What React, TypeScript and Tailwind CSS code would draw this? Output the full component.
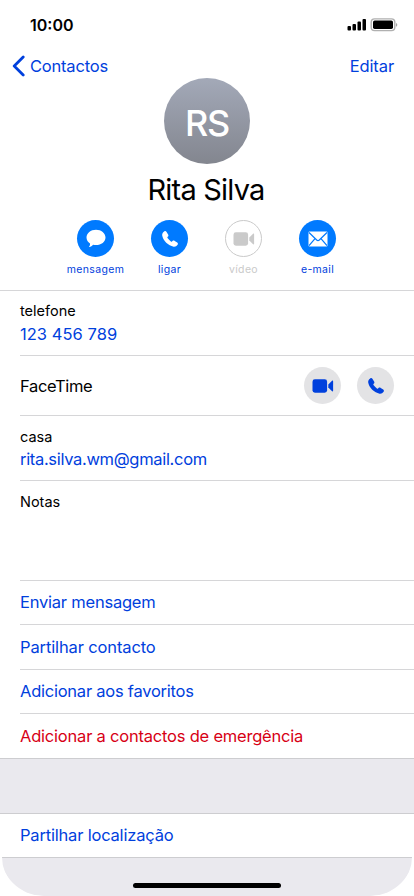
import type { ReactNode } from "react";

const PHONE_PATH =
  "M3.200 1.400C4 .9 4.900 1 5.400 1.800L7.100 4.500C7.600 5.300 7.500 6 6.900 6.600L6.500 7C6.200 7.400 6.200 7.700 6.500 8.100C7.400 9.400 8.600 10.600 9.900 11.500C10.300 11.800 10.600 11.800 11 11.500L11.500 11C12.100 10.500 12.900 10.400 13.700 10.900L16.200 12.600C17 13.200 17.100 14.100 16.600 14.800C15.600 16.200 14.300 16.900 12.600 16.700C7.500 16 1.900 10.500 1.200 5.600C1 3.800 1.700 2.300 3.200 1.400Z";

function PhoneIcon() {
  return (
    <svg width="18" height="18" viewBox="0 0 18 18" fill="currentColor">
      <path d={PHONE_PATH} />
    </svg>
  );
}

function VideoIcon() {
  return (
    <svg width="22" height="14" viewBox="0 0 22 14" fill="currentColor">
      <rect x="0.500" y="0.300" width="14.600" height="13.400" rx="2.400" />
      <path d="M16.300 5.600L19.800 1.900C20.400 1.300 21.100 1.500 21.100 2.400V11.600C21.100 12.500 20.400 12.700 19.800 12.100L16.300 8.400Z" />
    </svg>
  );
}

function MessageIcon() {
  return (
    <svg width="20" height="19" viewBox="0 0 20 19" fill="currentColor">
      <path d="M10 .8C15.300 .8 19.500 4.200 19.500 8.500S15.300 16.100 10 16.100C9 16.100 8 16 7.100 15.700C6.200 16.900 4.800 17.900 3.200 18C3 18 2.900 17.800 3.100 17.600C3.800 16.800 4.200 15.700 4 14.500C1.900 13.100 .5 11 .5 8.500C.5 4.200 4.700 .8 10 .8Z" />
    </svg>
  );
}

function MailIcon() {
  return (
    <svg width="20" height="16" viewBox="0 0 20 16">
      <rect x="0.500" y="0.500" width="19" height="15" rx="1.200" fill="#fff" />
      <path
        d="M1 1.500L8.700 9C9.500 9.700 10.500 9.700 11.300 9L19 1.500M1 14.700L7 7.600M19 14.700L13 7.600"
        fill="none"
        stroke="#007aff"
        strokeWidth="1.200"
      />
    </svg>
  );
}

function StatusIcons() {
  return (
    <svg width="51" height="14" viewBox="0 0 51 14">
      <rect x="0.500" y="8" width="3.500" height="4.500" rx="1" />
      <rect x="5.500" y="6" width="3.500" height="6.500" rx="1" />
      <rect x="10.500" y="3.500" width="3.500" height="9" rx="1" />
      <rect x="15.500" y="1" width="3.500" height="11.500" rx="1" />
      <rect x="24.200" y="0.900" width="23.600" height="11.700" rx="3.400" fill="#fff" stroke="#b0b0b0" strokeWidth="1.400" />
      <rect x="26" y="2.500" width="20" height="8.500" rx="1.700" />
      <path d="M49 5V8.700C50.800 7.900 50.800 5.800 49 5Z" fill="#a5a5a5" />
    </svg>
  );
}

function Action({ label, labelClass, circle, children }: { label: string; labelClass: string; circle: string; children: ReactNode }) {
  return (
    <div className="flex w-[74px] flex-col items-center">
      <div className={`flex h-[37px] w-[37px] items-center justify-center rounded-full ${circle}`}>{children}</div>
      <span className={`mt-[5px] whitespace-nowrap text-[10.5px] leading-[15px] tracking-[0.33px] ${labelClass}`}>{label}</span>
    </div>
  );
}

function LinkRow({ className, children }: { className: string; children: ReactNode }) {
  return (
    <div className={`ml-5 flex shrink-0 items-center whitespace-nowrap border-t border-[#d6d6d8] text-[16.5px] ${className}`}>
      <span>{children}</span>
    </div>
  );
}

export default function App() {
  return (
    <div className="h-[896px] w-[414px] overflow-hidden bg-white font-['Inter',sans-serif] text-black">
      <div className="flex h-full flex-col overflow-hidden rounded-b-[44px] bg-white">
        <div className="flex h-[50px] shrink-0 items-center justify-between pl-[30px] pr-[16px]">
          <span className="text-[16px] font-semibold leading-5">10:00</span>
          <StatusIcons />
        </div>

        <div className="flex h-[28px] shrink-0 items-center justify-between pl-3 pr-5 pt-1 text-[16.5px] text-[#0040dd]">
          <div className="flex items-center gap-[5px]">
            <svg width="13" height="22" viewBox="0 0 13 22" fill="none" stroke="currentColor" strokeWidth="2.800" strokeLinecap="round" strokeLinejoin="round">
              <path d="M11.200 2L2.200 11L11.200 20" />
            </svg>
            <span className="tracking-[-0.2px]">Contactos</span>
          </div>
          <span className="tracking-[-0.1px]">Editar</span>
        </div>

        <div className="flex h-[212px] shrink-0 flex-col items-center">
          <div className="flex h-[86px] w-[86px] items-center justify-center rounded-full bg-linear-to-b from-[#a3a9b8] to-[#83868f] text-[36px] font-medium text-white">
            <span className="mt-1 tracking-[-1.3px]">RS</span>
          </div>
          <h1 className="mt-[8px] pr-0.5 text-[29px] font-normal leading-9 tracking-[-0.8px]">Rita Silva</h1>
          <div className="mt-3 flex pr-px">
            <Action label="mensagem" labelClass="text-[#0040dd]" circle="bg-[#007aff] text-white">
              <MessageIcon />
            </Action>
            <Action label="ligar" labelClass="text-[#0040dd]" circle="bg-[#007aff] text-white">
              <PhoneIcon />
            </Action>
            <Action label="vídeo" labelClass="text-[#cacaca]" circle="border border-[#cacaca] text-[#cacaca]">
              <VideoIcon />
            </Action>
            <Action label="e-mail" labelClass="text-[#0040dd]" circle="bg-[#007aff]">
              <MailIcon />
            </Action>
          </div>
        </div>

        <div className="h-[65px] shrink-0 border-t border-[#d6d6d8] pl-5 pt-[10px]">
          <div className="text-[14.5px] leading-5">telefone</div>
          <div className="mt-[2px] text-[16.5px] leading-[22px] tracking-[0.04px] text-[#0040dd]">123 456 789</div>
        </div>
        <div className="ml-5 flex h-[60px] shrink-0 items-center border-t border-[#d6d6d8] pr-5 text-[16.5px]">
          <span className="mr-auto pt-px tracking-[-0.35px]">FaceTime</span>
          <div className="flex gap-4 text-[#0040dd]">
            <div className="flex h-[37px] w-[37px] items-center justify-center rounded-full bg-[#e3e3e5]">
              <VideoIcon />
            </div>
            <div className="flex h-[37px] w-[37px] items-center justify-center rounded-full bg-[#e3e3e5]">
              <PhoneIcon />
            </div>
          </div>
        </div>
        <div className="ml-5 h-[65px] shrink-0 border-t border-[#d6d6d8] pt-[11px]">
          <div className="text-[14.5px] leading-5">casa</div>
          <div className="mt-px text-[16.5px] leading-[22px] tracking-[-0.32px] text-[#0040dd]">rita.silva.wm@gmail.com</div>
        </div>
        <div className="ml-5 h-[100px] shrink-0 border-t border-[#d6d6d8] pt-[11px]">
          <div className="text-[14.5px] leading-5">Notas</div>
        </div>
        <LinkRow className="h-[44px] tracking-[-0.22px] text-[#0040dd]">Enviar mensagem</LinkRow>
        <LinkRow className="h-[45px] pt-px tracking-[-0.13px] text-[#0040dd]">Partilhar contacto</LinkRow>
        <LinkRow className="h-[44px] tracking-[-0.24px] text-[#0040dd]">Adicionar aos favoritos</LinkRow>
        <LinkRow className="h-[45px] pt-px tracking-[-0.21px] text-[#d70015]">Adicionar a contactos de emergência</LinkRow>

        <div className="h-[55px] shrink-0 border-t border-[#cdcdd0] bg-[#eae9ee]" />
        <div className="flex h-[44px] shrink-0 items-center border-t border-[#cdcdd0] pl-5 text-[16.5px] tracking-[-0.19px] text-[#0040dd]">
          Partilhar localização
        </div>
        <div className="mx-[2px] flex flex-1 items-end justify-center rounded-b-[42px] border-t border-[#cdcdd0] bg-[#eae9ee] pb-[8px]">
          <div className="h-[5px] w-[148px] rounded-full bg-black" />
        </div>
      </div>
    </div>
  );
}
